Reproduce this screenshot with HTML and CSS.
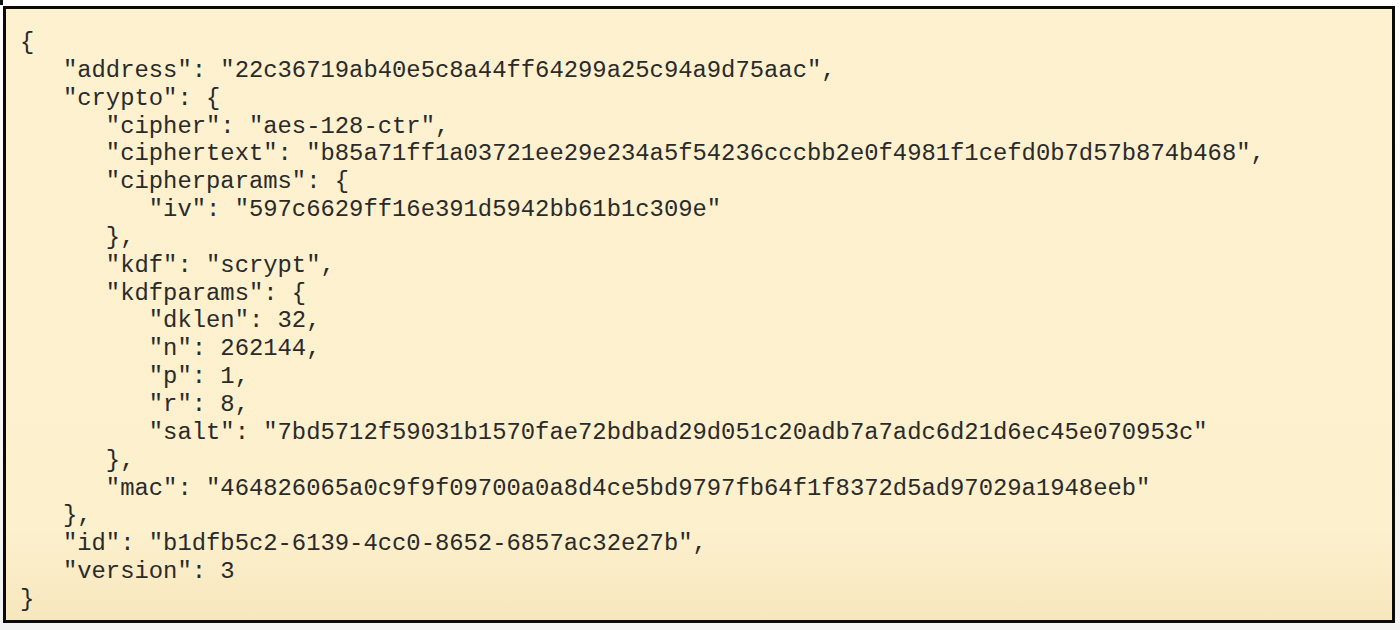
FILE: index.html
```html
<!DOCTYPE html>
<html>
<head>
<meta charset="utf-8">
<link rel="stylesheet" href="styles.css">
</head>
<body>
<div class="mark"></div>
<div class="box">
<pre class="code">{
   "address": "22c36719ab40e5c8a44ff64299a25c94a9d75aac",
   "crypto": {
      "cipher": "aes-128-ctr",
      "ciphertext": "b85a71ff1a03721ee29e234a5f54236cccbb2e0f4981f1cefd0b7d57b874b468",
      "cipherparams": {
         "iv": "597c6629ff16e391d5942bb61b1c309e"
      },
      "kdf": "scrypt",
      "kdfparams": {
         "dklen": 32,
         "n": 262144,
         "p": 1,
         "r": 8,
         "salt": "7bd5712f59031b1570fae72bdbad29d051c20adb7a7adc6d21d6ec45e070953c"
      },
      "mac": "464826065a0c9f9f09700a0a8d4ce5bd9797fb64f1f8372d5ad97029a1948eeb"
   },
   "id": "b1dfb5c2-6139-4cc0-8652-6857ac32e27b",
   "version": 3
}</pre>
</div>
</body>
</html>
```
FILE: styles.css
```css
html, body {
  margin: 0;
  padding: 0;
  background: #f3f3f3;
}
body {
  position: relative;
  width: 1400px;
  height: 630px;
  overflow: hidden;
  background: linear-gradient(#ffffff 0, #ffffff 10px, #f3f3f3 600px);
}
.mark {
  position: absolute;
  left: 0;
  top: 0;
  width: 3px;
  height: 5px;
  background: #111;
}
.box {
  margin: 6px 0 0 3px;
  width: 1392px;
  height: 617px;
  box-sizing: border-box;
  border: 3px solid #0a0a0a;
  background: linear-gradient(#fdf1cf, #fcf0cd 85%, #f7e7bd);
  padding: 20px 0 0 14px;
}
.code {
  margin: 0;
  font-family: "Liberation Mono", "Courier New", monospace;
  font-size: 23.85px;
  line-height: 27.85px;
  color: #2a2a2a;
}
```
